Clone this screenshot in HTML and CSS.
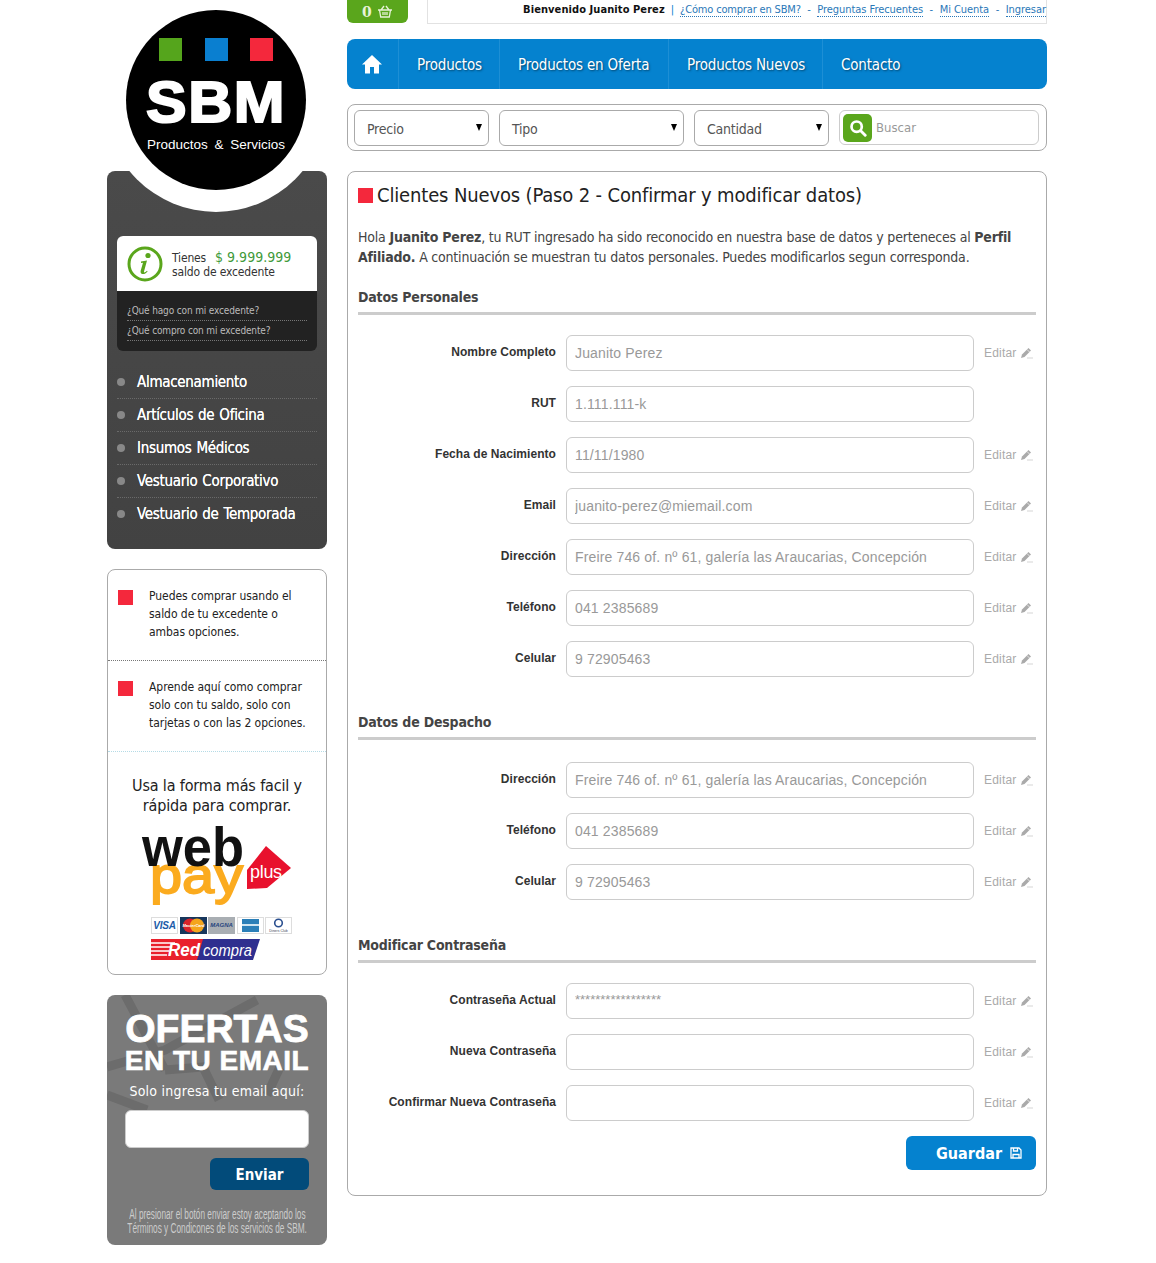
FILE: index.html
```html
<!DOCTYPE html>
<html lang="es">
<head>
<meta charset="utf-8">
<title>SBM - Clientes Nuevos</title>
<link rel="stylesheet" href="styles.css">
</head>
<body>
<svg class="defs" width="0" height="0" aria-hidden="true"><symbol id="pen" viewBox="0 0 13 12"><path d="M1 11l1-3.500L8.500 1l2.500 2.500L4.500 10z" fill="#aaa"/><path d="M7 2.500l2.500 2.500" stroke="#fff" stroke-width=".7"/><path d="M7.500 11h1M9.500 11h1M11.500 11h1" stroke="#aaa"/></symbol></svg>
<div class="page">
  <aside class="sidebar">
    <div class="logo">
      <div class="logo-squares"><i class="sq green"></i><i class="sq blue"></i><i class="sq red"></i></div>
      <div class="logo-name">SBM</div>
      <div class="logo-sub">Productos &amp; Servicios</div>
    </div>
    <div class="dark-panel">
      <div class="balance">
        <div class="balance-top">
          <svg class="info-icon" viewBox="0 0 36 36" width="36" height="36"><circle cx="18" cy="18" r="16" fill="none" stroke="#5aa61c" stroke-width="3"/><circle cx="21" cy="9.5" r="2.6" fill="#5aa61c"/><path d="M14 15.5l6-1-3 11c-.3 1.200.7 1.400 3-.8l.6.7c-2.500 3.200-7.500 4-7-.4l2.400-8.200-2 .2z" fill="#5aa61c"/></svg>
          <div class="balance-text">
            <div><span class="has">Tienes</span><span class="amount">$ 9.999.999</span></div>
            <div>saldo de excedente</div>
          </div>
        </div>
        <div class="balance-links">
          <a>¿Qué hago con mi excedente?</a>
          <a>¿Qué compro con mi excedente?</a>
        </div>
      </div>
      <ul class="cats">
        <li>Almacenamiento</li>
        <li>Artículos de Oficina</li>
        <li>Insumos Médicos</li>
        <li>Vestuario Corporativo</li>
        <li>Vestuario de Temporada</li>
      </ul>
    </div>

    <div class="help-panel">
      <div class="tip tip-a"><i class="bullet"></i><p>Puedes comprar usando el saldo de tu excedente o ambas opciones.</p></div>
      <div class="tip tip-b"><i class="bullet"></i><p>Aprende aquí como comprar solo con tu saldo, solo con tarjetas o con las 2 opciones.</p></div>
      <div class="pay">
        <p class="pay-title">Usa la forma más facil y rápida para comprar.</p>
        <svg class="webpay" viewBox="0 0 150 84" width="150" height="84">
          <text x="9" y="68" class="wp wp-pay" textLength="93" lengthAdjust="spacingAndGlyphs">pay</text>
          <text x="1" y="41" class="wp wp-web" textLength="102" lengthAdjust="spacingAndGlyphs">web</text>
          <path d="M106 64V45L125 21L150 43L126 63z" fill="#e8112d"/>
          <text x="109" y="53" class="wp-plus">plus</text>
        </svg>
        <div class="cards">
          <span class="card card-visa">VISA</span>
          <svg class="card card-mc" viewBox="0 0 27 17" width="27" height="17"><rect width="27" height="17" fill="#17365c"/><circle cx="10" cy="8.500" r="7" fill="#d9222a"/><circle cx="17" cy="8.500" r="7" fill="#f4a51c"/><text x="13.500" y="10" class="card-tiny card-tiny-mc">MasterCard</text></svg>
          <span class="card card-magna">MAGNA</span>
          <svg class="card card-amex" viewBox="0 0 27 17" width="27" height="17"><rect x=".5" y=".5" width="26" height="16" fill="#fff" stroke="#ddd"/><rect x="5" y="2" width="17" height="13" fill="#2b7fb8"/><rect x="5" y="7" width="17" height="2" fill="#cfe4f0"/></svg>
          <svg class="card card-diners" viewBox="0 0 27 17" width="27" height="17"><rect x=".5" y=".5" width="26" height="16" fill="#fff" stroke="#ddd"/><circle cx="13.500" cy="6" r="3.800" fill="none" stroke="#2a4f8f" stroke-width="1.600"/><text x="13.500" y="14.500" class="card-tiny">Diners Club</text></svg>
        </div>
        <svg class="redcompra" viewBox="0 0 109 21" width="109" height="21">
          <path d="M0 0H109L102 21H0z" fill="#2f2f8f"/>
          <path d="M0 0H52L46 21H0z" fill="#e9202c"/>
          <path d="M0 4H24M0 8H20M0 12H18M0 16H16" stroke="#fff" stroke-width="1.500"/>
          <text x="17" y="17" class="rc" textLength="32" lengthAdjust="spacingAndGlyphs">Red</text>
          <text x="52" y="16.500" class="rc rc-2" textLength="49" lengthAdjust="spacingAndGlyphs">compra</text>
        </svg>
      </div>
    </div>

    <div class="offers">
      <svg class="offers-bg" viewBox="0 0 220 250" width="220" height="250"><path d="M18 0L58 75M0 72L58 55L150 5M58 75L96 72L112 105M0 100L40 115M173 72L160 100" fill="none" stroke="#6c6c6c" stroke-width="9"/></svg>
      <div class="off-big">OFERTAS</div>
      <div class="off-mid">EN TU EMAIL</div>
      <div class="off-sub">Solo ingresa tu email aquí:</div>
      <input class="off-input" type="text" aria-label="Email">
      <div class="off-actions"><button class="off-btn" type="button">Enviar</button></div>
      <p class="off-legal"><span>Al presionar el botón enviar estoy aceptando los</span><span>Términos y Condicones de los servicios de SBM.</span></p>
    </div>
  </aside>

  <main class="content">
    <div class="topbar">
      <div class="cart">
        <b>0</b>
        <svg viewBox="0 0 16 13" width="16" height="13"><path d="M1 5h14M2.500 5l1.200 7h8.600l1.200-7M4 5l3-4M12 5L9 1M6 7v3M8 7v3M10 7v3" fill="none" stroke="#e8f3d8" stroke-width="1.300"/></svg>
      </div>
      <div class="welcome">
        <b>Bienvenido Juanito Perez</b><span class="pipe">|</span><a class="link-how">¿Cómo comprar en SBM?</a><span class="dash">-</span><a>Preguntas Frecuentes</a><span class="dash">-</span><a>Mi Cuenta</a><span class="dash">-</span><a>Ingresar</a>
      </div>
    </div>

    <nav class="nav">
      <a class="nav-home"><svg viewBox="0 0 20 20" width="20" height="20"><path d="M10 1 L20 10.500 H17 V19.500 H12 V13 H8 V19.500 H3 V10.500 H0z" fill="#fff"/></svg></a>
      <a class="nav-a">Productos</a>
      <a class="nav-b">Productos en Oferta</a>
      <a class="nav-c">Productos Nuevos</a>
      <a class="nav-d">Contacto</a>
    </nav>

    <div class="filters">
      <div class="select s-precio">Precio</div>
      <div class="select s-tipo">Tipo</div>
      <div class="select s-cant">Cantidad</div>
      <div class="search">
        <span class="search-btn"><svg viewBox="0 0 20 20" width="18" height="18"><circle cx="8.500" cy="8.500" r="5.700" fill="none" stroke="#fff" stroke-width="3"/><path d="M13 13l5 5" stroke="#fff" stroke-width="3.200" stroke-linecap="round"/></svg></span>
        <span class="search-ph">Buscar</span>
      </div>
    </div>

    <section class="panel">
      <h1 class="title"><i class="title-sq"></i>Clientes Nuevos (Paso 2 - Confirmar y modificar datos)</h1>
      <p class="intro">Hola <b>Juanito Perez</b>, tu RUT ingresado ha sido reconocido en nuestra base de datos y perteneces al <b>Perfil Afiliado.</b> A continuación se muestran tu datos personales. Puedes modificarlos segun corresponda.</p>

      <h2 class="sec sec-first">Datos Personales</h2>
      <div class="rows">
        <div class="row"><label>Nombre Completo</label><input type="text" value="Juanito Perez"><a class="edit">Editar<svg class="pen" width="13" height="12"><use href="#pen"/></svg></a></div>
        <div class="row"><label>RUT</label><input type="text" value="1.111.111-k"></div>
        <div class="row"><label>Fecha de Nacimiento</label><input type="text" value="11/11/1980"><a class="edit">Editar<svg class="pen" width="13" height="12"><use href="#pen"/></svg></a></div>
        <div class="row"><label>Email</label><input type="text" value="juanito-perez@miemail.com"><a class="edit">Editar<svg class="pen" width="13" height="12"><use href="#pen"/></svg></a></div>
        <div class="row"><label>Dirección</label><input type="text" value="Freire 746 of. nº 61, galería las Araucarias, Concepción"><a class="edit">Editar<svg class="pen" width="13" height="12"><use href="#pen"/></svg></a></div>
        <div class="row"><label>Teléfono</label><input type="text" value="041 2385689"><a class="edit">Editar<svg class="pen" width="13" height="12"><use href="#pen"/></svg></a></div>
        <div class="row"><label>Celular</label><input type="text" value="9 72905463"><a class="edit">Editar<svg class="pen" width="13" height="12"><use href="#pen"/></svg></a></div>
      </div>

      <h2 class="sec">Datos de Despacho</h2>
      <div class="rows rows-wide">
        <div class="row"><label>Dirección</label><input type="text" value="Freire 746 of. nº 61, galería las Araucarias, Concepción"><a class="edit">Editar<svg class="pen" width="13" height="12"><use href="#pen"/></svg></a></div>
        <div class="row"><label>Teléfono</label><input type="text" value="041 2385689"><a class="edit">Editar<svg class="pen" width="13" height="12"><use href="#pen"/></svg></a></div>
        <div class="row"><label>Celular</label><input type="text" value="9 72905463"><a class="edit">Editar<svg class="pen" width="13" height="12"><use href="#pen"/></svg></a></div>
      </div>

      <h2 class="sec">Modificar Contraseña</h2>
      <div class="rows rows-last">
        <div class="row"><label>Contraseña Actual</label><input class="pw" type="text" value="*****************"><a class="edit">Editar<svg class="pen" width="13" height="12"><use href="#pen"/></svg></a></div>
        <div class="row"><label>Nueva Contraseña</label><input type="text"><a class="edit">Editar<svg class="pen" width="13" height="12"><use href="#pen"/></svg></a></div>
        <div class="row"><label>Confirmar Nueva Contraseña</label><input type="text"><a class="edit">Editar<svg class="pen" width="13" height="12"><use href="#pen"/></svg></a></div>
      </div>
      <div class="actions">
        <button class="save" type="button">Guardar<svg viewBox="0 0 12 12" width="12" height="12"><path d="M1 1h8l2 2v8H1z M3.500 1v3h4V1 M3 7.500h6V11H3z" fill="none" stroke="#fff" stroke-width="1.300"/></svg></button>
      </div>
    </section>
  </main>
</div>
</body>
</html>
```

FILE: styles.css
```css
* { box-sizing: border-box; }
html, body { margin: 0; padding: 0; background: #fff; }
body { font-family: "DejaVu Sans Condensed", "DejaVu Sans", sans-serif; color: #444; }
a { text-decoration: none; }
p { margin: 0; }
i { display: block; }
.defs { display: block; height: 0; }

.page { display: flex; gap: 20px; width: 940px; margin-left: 107px; height: 1263px; }
.sidebar { width: 220px; flex: none; position: relative; padding-top: 171px; }
.content { width: 700px; flex: none; }

/* logo */
.logo {
  position: absolute; z-index: 2; left: 19px; top: 10px; width: 180px; height: 180px; border-radius: 50%;
  background: #000; color: #fff; text-align: center; font-family: "Liberation Sans", Arial, sans-serif;
}
.logo-squares { display: flex; justify-content: center; gap: 22.500px; padding-top: 28px; }
.sq { width: 23px; height: 23px; }
.green { background: #55a51c; }
.blue { background: #0a7fd0; }
.red { background: #f4283c; }
.logo-name { font-weight: 700; font-size: 58px; line-height: 56px; margin-top: 13px; letter-spacing: 1.500px; -webkit-text-stroke: 2px #fff; transform: scaleX(1.05); }
.logo-sub { font-size: 13.500px; line-height: 16px; margin-top: 7px; word-spacing: 3px; }

/* dark panel */
.dark-panel {
  position: relative; height: 378px; border-radius: 8px; overflow: hidden; background: linear-gradient(#4a4a4a, #424242); padding: 65px 10px 0;
}
.dark-panel::before {
  content: ""; position: absolute; left: -3px; top: -183px; width: 224px; height: 224px; border-radius: 50%; background: #fff;
}
.balance { position: relative; border-radius: 6px; overflow: hidden; background: #222; }
.balance-top { display: flex; align-items: center; gap: 9px; height: 55px; padding-left: 10px; background: #fff; }
.balance-text { font-size: 12px; line-height: 14px; color: #333; margin-top: 1px; letter-spacing: -.15px; }
.has { margin-right: 9px; }
.amount { color: #3f9a3a; font-size: 14px; letter-spacing: 0; }
.balance-links { padding: 10px 10px 10px; height: 60px; }
.balance-links a { display: block; font-size: 10px; line-height: 19px; height: 20px; color: #bbb; border-bottom: 1px dotted #777; letter-spacing: -.15px; }
.cats { list-style: none; margin: 15px 0 0; padding: 0; }
.cats li {
  position: relative; height: 33px; line-height: 32px; padding-left: 20px; font-size: 15px; color: #fff; border-bottom: 1px dotted #6a6a6a; letter-spacing: -.3px; word-spacing: 1px; text-shadow: 0 0 .5px #fff;
}
.cats li:last-child { border-bottom: 0; }
.cats li::before { content: ""; position: absolute; left: 0; top: 12px; width: 8px; height: 8px; border-radius: 50%; background: #888; }

/* help */
.help-panel { margin-top: 20px; height: 406px; border: 1px solid #aaa; border-radius: 8px; }
.tip { display: flex; gap: 16px; padding: 17px 10px 0; font-size: 12px; line-height: 18px; color: #222; letter-spacing: -.05px; }
.tip-a { height: 91px; border-bottom: 1px dotted #777; }
.tip-b { height: 91px; border-bottom: 1px dotted #b5dbe6; }
.bullet { width: 15px; height: 15px; background: #f4283c; flex: none; margin-top: 3px; }
.pay { text-align: center; padding-top: 24px; }
.pay-title { font-size: 16px; line-height: 20px; color: #222; padding: 0 20px; letter-spacing: -.15px; }
.webpay { display: block; margin: 9px 0 0 33px; }
.wp { font-family: "Liberation Sans", Arial, sans-serif; font-weight: 700; }
.wp-web { font-size: 56px; fill: #111; }
.wp-pay { font-size: 52px; fill: #fbab1f; font-weight: 400; stroke: #fbab1f; stroke-width: 1.800px; }
.wp-plus { font-family: "Liberation Sans", Arial, sans-serif; font-size: 18px; fill: #fff; letter-spacing: -.3px; }
.cards { display: flex; gap: 1.500px; margin: 8px 0 0 43px; height: 18px; }
.card { display: block; flex: none; width: 27px; height: 17px; font-family: "Liberation Sans", Arial, sans-serif; font-size: 10px; line-height: 17px; font-weight: 700; font-style: italic; text-align: center; }
.card-visa { background: #fff; color: #1c5ca8; border: 1px solid #ddd; line-height: 15px; letter-spacing: -.2px; }
.card-magna { background: #a9aeb3; color: #27457e; font-size: 6px; }
.card-tiny { font-size: 3.500px; font-family: "Liberation Sans", Arial, sans-serif; fill: #445; text-anchor: middle; font-style: normal; font-weight: 400; }
.card-tiny-mc { fill: #fff; font-style: italic; font-weight: 700; font-size: 4px; }
.redcompra { display: block; margin: 4px 0 0 43px; }
.rc { font-family: "Liberation Sans", Arial, sans-serif; font-style: italic; font-weight: 700; font-size: 18px; fill: #fff; }
.rc-2 { font-size: 16px; font-weight: 400; }

/* offers */
.offers { position: relative; overflow: hidden; margin-top: 20px; height: 250px; border-radius: 8px; background: #7a7a7a; text-align: center; color: #fff; font-family: "Liberation Sans", Arial, sans-serif; }
.offers-bg { position: absolute; left: 0; top: 0; }
.off-big, .off-mid, .off-sub, .off-input, .off-actions, .off-legal { position: relative; }
.off-big { font-weight: 700; font-size: 39px; line-height: 40px; height: 52px; padding-top: 14px; -webkit-text-stroke: .8px #fff; }
.off-mid { font-weight: 700; font-size: 28px; line-height: 28px; letter-spacing: .5px; -webkit-text-stroke: .6px #fff; }
.off-sub { font-family: "DejaVu Sans Condensed", "DejaVu Sans", sans-serif; font-size: 14px; line-height: 18px; margin-top: 7px; letter-spacing: .25px; }
.off-input { display: block; width: 184px; height: 38px; margin: 10px 0 0 18px; background: #fff; border: 1px solid #ccc; border-radius: 6px; }
.off-actions { display: flex; justify-content: flex-end; padding-right: 18px; margin-top: 10px; }
.off-btn { width: 99px; height: 32px; border: 0; border-radius: 6px; background: #024b7a; color: #fff; font-family: "DejaVu Sans Condensed", "DejaVu Sans", sans-serif; font-weight: 700; font-size: 15px; padding: 2px 0 0; }
.off-legal { display: flex; flex-direction: column; align-items: center; margin-top: 17px; font-size: 14px; line-height: 14px; color: #ccc; }
.off-legal span { flex: none; width: max-content; white-space: nowrap; transform: scaleX(.59); }

/* top bar */
.topbar { display: flex; gap: 19px; height: 24px; }
.cart { display: flex; align-items: center; gap: 5px; width: 61px; height: 23px; padding-left: 15px; border-radius: 0 0 6px 6px; background: #5aa61c; color: #e8f3d8; }
.cart b { font-family: "DejaVu Serif", serif; font-size: 14px; }
.welcome { flex: 1; display: flex; align-items: flex-start; justify-content: flex-end; height: 24px; padding-top: 3px; border: 1px solid #e2e2e2; border-top: 0; font-size: 11px; line-height: 13px; color: #111; white-space: nowrap; }
.welcome b { letter-spacing: .08px; }
.welcome a { color: #2a78b8; border-bottom: 1px dotted #2a78b8; height: 14px; letter-spacing: -.05px; }
.welcome .link-how { letter-spacing: -.17px; }
.pipe { color: #0a7fd0; margin: 0 6px; }
.dash { color: #2a78b8; margin: 0 6.500px; }

/* nav */
.nav { display: flex; height: 50px; margin-top: 15px; border-radius: 8px; background: #0582cf; }
.nav a { display: flex; align-items: center; padding: 2px 0 0 18px; border-left: 1px solid #1d8fd5; color: #fff; font-size: 15px; letter-spacing: -.18px; text-shadow: 1px 1px 2px #03466f; }
.nav .nav-home { width: 51px; padding: 0 0 0 15px; border-left: 0; }
.nav-a { width: 101px; }
.nav-b { width: 169px; }
.nav-c { width: 154px; }

/* filters */
.filters { display: flex; gap: 10px; height: 47px; margin-top: 15px; padding: 5px 7px 0 6px; border: 1px solid #aaa; border-radius: 8px; }
.select { position: relative; height: 36px; padding-left: 12px; border: 1px solid #aaa; border-radius: 6px; font-size: 14px; line-height: 36px; color: #555; letter-spacing: -.25px; }
.select::after { content: ""; position: absolute; right: 6px; top: 13px; border: 3.500px solid transparent; border-top: 7px solid #000; border-bottom: 0; }
.s-precio { width: 135px; }
.s-tipo { width: 185px; }
.s-cant { width: 135px; }
.search { display: flex; align-items: center; gap: 4px; width: 200px; height: 35px; padding-left: 3px; border: 1px solid #ccc; border-radius: 6px; }
.search-btn { display: flex; align-items: center; justify-content: center; width: 29px; height: 28px; border-radius: 5px; background: #5aa61c; }
.search-ph { font-size: 13px; color: #999; }

/* main panel */
.panel { height: 1025px; margin-top: 20px; padding: 10px 10px 0; border: 1px solid #aaa; border-radius: 8px; }
.title { display: flex; align-items: center; gap: 4px; margin: 0; height: 26px; font-size: 20px; font-weight: 400; color: #222; white-space: nowrap; letter-spacing: -.15px; }
.title-sq { width: 15px; height: 15px; background: #f4283c; flex: none; }
.intro { margin-top: 19px; font-size: 14px; line-height: 20px; color: #444; letter-spacing: -.2px; }
.intro b { font-weight: 700; }
.sec { margin: 0; height: 28px; border-bottom: 3px solid #ccc; font-size: 14px; line-height: 20px; font-weight: 700; color: #444; letter-spacing: -.2px; }
.sec-first { margin-top: 20px; }
.rows { display: flex; flex-direction: column; gap: 15px; padding-top: 20px; margin-bottom: 35px; }
.rows-wide { padding-top: 22px; }
.rows-last { margin-bottom: 0; }
.row { display: flex; align-items: flex-start; height: 36px; font-family: "Liberation Sans", Arial, sans-serif; }
.row label { width: 198px; padding-top: 9px; text-align: right; font-size: 12px; line-height: 16px; font-weight: 700; color: #333; letter-spacing: .05px; white-space: nowrap; }
.row input { width: 408px; height: 36px; margin-left: 10px; padding: 0 8px 1px; border: 1px solid #ccc; border-radius: 6px; outline: 0; background: #fff; font-family: "Liberation Sans", Arial, sans-serif; font-size: 14px; color: #999; letter-spacing: .15px; }
.row input.pw { font-size: 13px; padding: 0 8px 4px; letter-spacing: 0; }
.edit { display: flex; align-items: center; gap: 3px; height: 36px; margin-left: 10px; font-size: 12px; color: #aaa; letter-spacing: .2px; }
.actions { display: flex; justify-content: flex-end; padding-top: 15px; }
.save { display: flex; align-items: center; justify-content: flex-end; gap: 8px; width: 130px; height: 34px; padding: 0 14px 0 0; border: 0; border-radius: 6px; background: #0582cf; color: #fff; font-family: "DejaVu Sans Condensed", "DejaVu Sans", sans-serif; font-weight: 700; font-size: 16px; }
```
